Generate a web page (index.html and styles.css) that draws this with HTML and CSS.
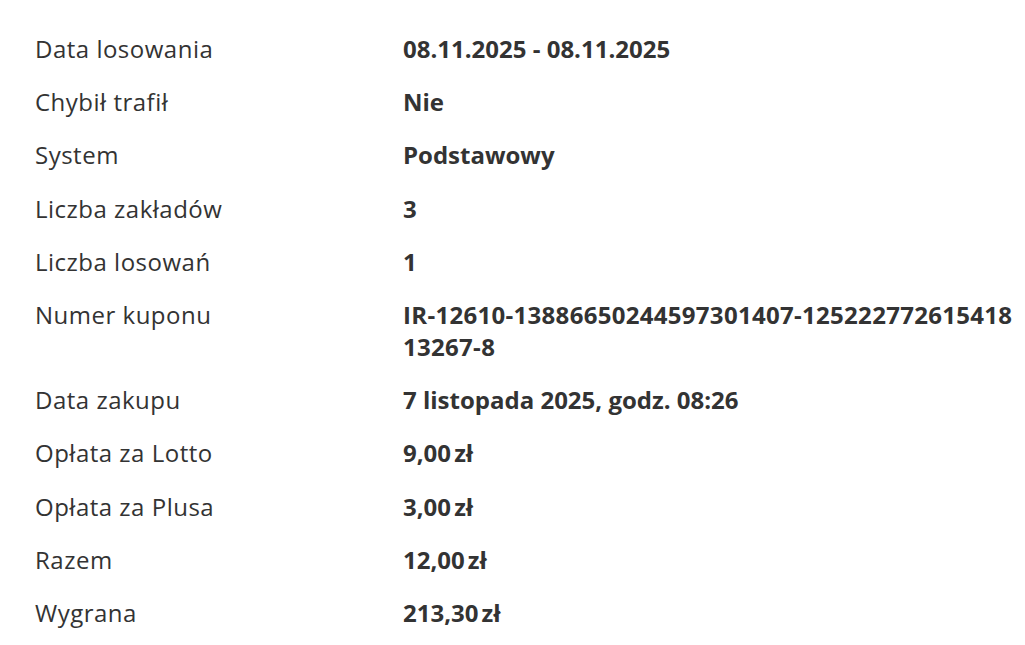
FILE: index.html
```html
<!DOCTYPE html>
<html lang="pl">
<head>
<meta charset="utf-8">
<link rel="stylesheet" href="styles.css">
</head>
<body>
<div class="details">
  <div class="label">Data losowania</div><div class="value">08.11.2025 - 08.11.2025</div>
  <div class="label">Chybił trafił</div><div class="value">Nie</div>
  <div class="label">System</div><div class="value">Podstawowy</div>
  <div class="label">Liczba zakładów</div><div class="value">3</div>
  <div class="label">Liczba losowań</div><div class="value">1</div>
  <div class="label">Numer kuponu</div><div class="value coupon">IR-12610-13886650244597301407-12522277261541813267-8</div>
  <div class="label">Data zakupu</div><div class="value">7 listopada 2025, godz. 08:26</div>
  <div class="label">Opłata za Lotto</div><div class="value">9,00&#8239;zł</div>
  <div class="label">Opłata za Plusa</div><div class="value">3,00&#8239;zł</div>
  <div class="label">Razem</div><div class="value">12,00&#8239;zł</div>
  <div class="label">Wygrana</div><div class="value">213,30&#8239;zł</div>
</div>
</body>
</html>
```
FILE: styles.css
```css
html, body {
  margin: 0;
  padding: 0;
  background: #fff;
}
body {
  font-family: "Open Sans", "Noto Sans", sans-serif;
  color: #333;
  font-size: 24px;
  line-height: 32px;
}
.details {
  display: grid;
  grid-template-columns: 368px 1fr;
  row-gap: 21.2px;
  padding: 33px 8px 0 35px;
}
.label {
  letter-spacing: 0.5px;
}
.value {
  font-weight: 700;
}
.coupon {
  word-break: break-all;
  letter-spacing: 0.3px;
}
```
